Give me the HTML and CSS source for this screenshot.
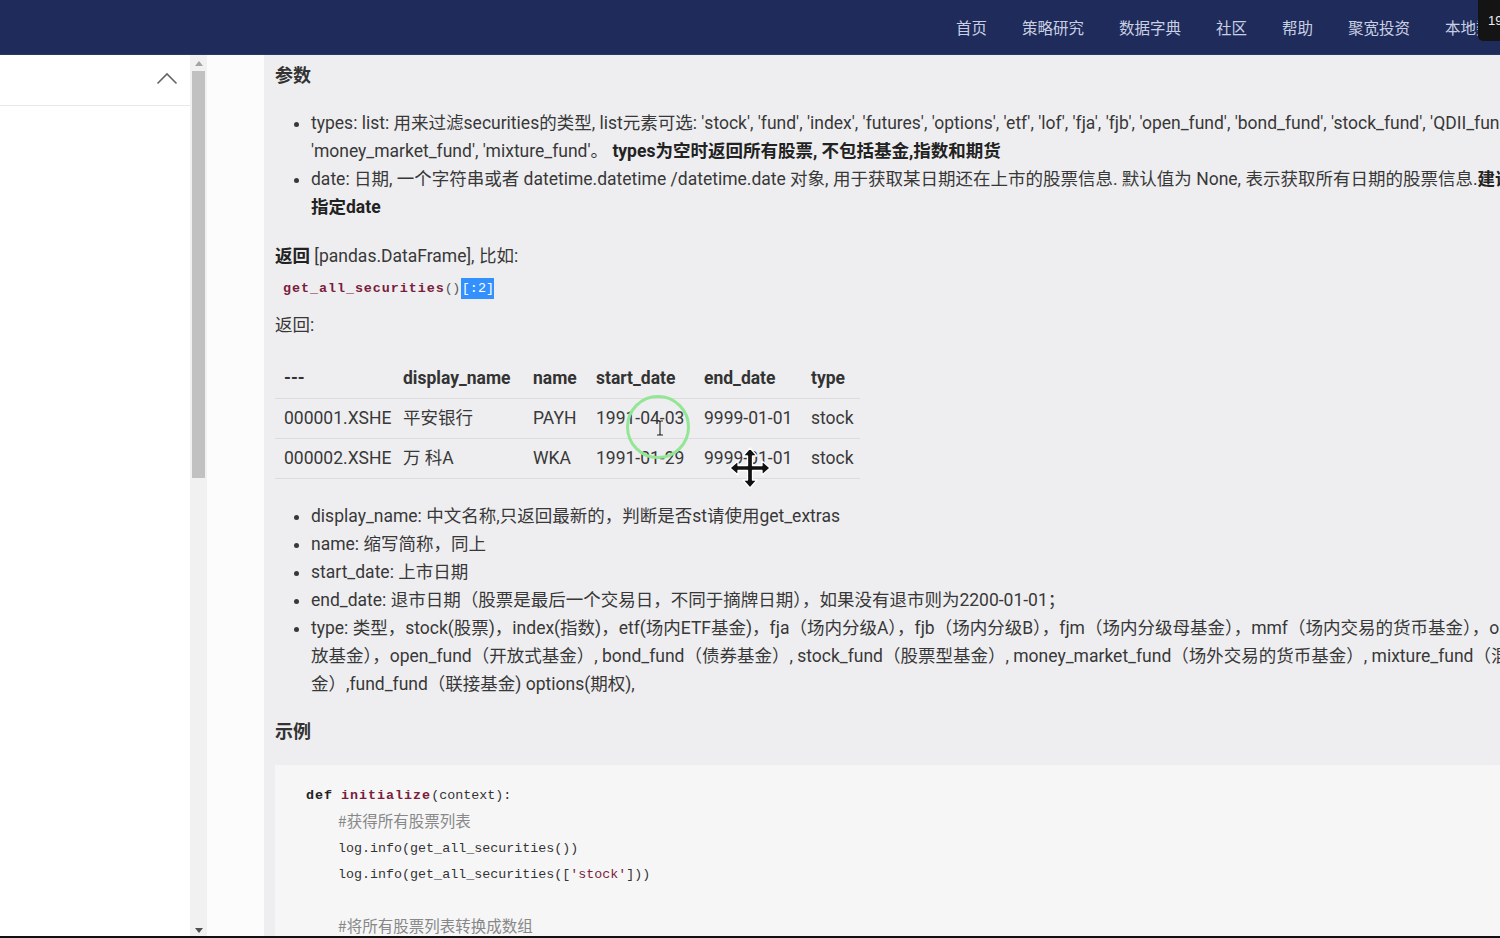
FILE: index.html
```html
<!DOCTYPE html>
<html lang="zh-CN">
<head>
<meta charset="utf-8">
<title>get_all_securities</title>
<link rel="stylesheet" href="styles.css">
</head>
<body>
<header class="topbar">
  <nav class="nav">
    <a>首页</a><a>策略研究</a><a>数据字典</a><a>社区</a><a>帮助</a><a>聚宽投资</a><a>本地数据</a>
  </nav>
  <div class="badge">19</div>
</header>
<div class="main">
  <aside class="sidebar">
    <div class="side-head">
      <svg class="chev" width="22" height="14" viewBox="0 0 22 14"><path d="M1.5 12.5 L11 3 L20.5 12.5" fill="none" stroke="#666" stroke-width="1.6"/></svg>
    </div>
  </aside>
  <div class="scrollbar">
    <div class="sb-btn"><svg width="8" height="5" viewBox="0 0 8 5"><path d="M0 5 L4 0 L8 5 Z" fill="#a3a3a3"/></svg></div>
    <div class="sb-thumb"></div>
    <div class="sb-fill"></div>
    <div class="sb-btn"><svg width="8" height="5" viewBox="0 0 8 5"><path d="M0 0 L4 5 L8 0 Z" fill="#505050"/></svg></div>
  </div>
  <div class="gutter"></div>
  <article class="content">
    <h3 class="h first">参数</h3>
    <ul class="list params">
      <li>types: list: 用来过滤securities的类型, list元素可选: 'stock', 'fund', 'index', 'futures', 'options', 'etf', 'lof', 'fja', 'fjb', 'open_fund', 'bond_fund', 'stock_fund', 'QDII_fund',<br>'money_market_fund', 'mixture_fund'。 <b>types为空时返回所有股票, 不包括基金,指数和期货</b></li>
      <li>date: 日期, 一个字符串或者 datetime.datetime /datetime.date 对象, 用于获取某日期还在上市的股票信息. 默认值为 None, 表示获取所有日期的股票信息.<b>建议</b><br><b>指定date</b></li>
    </ul>
    <p class="ret"><b>返回</b> [pandas.DataFrame], 比如:</p>
    <p class="call"><code class="fn">get_all_securities</code><code class="par">()</code><code class="sel">[:2]</code></p>
    <p class="ret2">返回:</p>
    <table class="tbl">
      <colgroup><col class="c1"><col class="c2"><col class="c3"><col class="c4"><col class="c5"><col class="c6"></colgroup>
      <thead><tr><th>---</th><th>display_name</th><th>name</th><th>start_date</th><th>end_date</th><th>type</th></tr></thead>
      <tbody>
        <tr><td>000001.XSHE</td><td>平安银行</td><td>PAYH</td><td>1991-04-03</td><td>9999-01-01</td><td>stock</td></tr>
        <tr><td>000002.XSHE</td><td>万 科A</td><td>WKA</td><td>1991-01-29</td><td>9999-01-01</td><td>stock</td></tr>
      </tbody>
    </table>
    <ul class="list fields">
      <li>display_name: 中文名称,只返回最新的，判断是否st请使用get_extras</li>
      <li>name: 缩写简称，同上</li>
      <li>start_date: 上市日期</li>
      <li>end_date: 退市日期（股票是最后一个交易日，不同于摘牌日期），如果没有退市则为2200-01-01；</li>
      <li>type: 类型，stock(股票)，index(指数)，etf(场内ETF基金)，fja（场内分级A），fjb（场内分级B），fjm（场内分级母基金），mmf（场内交易的货币基金），open_fund（开<br>放基金），open_fund（开放式基金）, bond_fund（债券基金）, stock_fund（股票型基金）, money_market_fund（场外交易的货币基金）, mixture_fund（混合型基<br>金）,fund_fund（联接基金) options(期权),</li>
    </ul>
    <h3 class="h ex">示例</h3>
    <pre class="codeblock"><span class="kw">def</span> <span class="fnm">initialize</span>(context):
    <span class="cm">#获得所有股票列表</span>
    log.info(get_all_securities())
    log.info(get_all_securities([<span class="st">'stock'</span>]))

    <span class="cm">#将所有股票列表转换成数组</span>
    stocks = list(get_all_securities(['stock']).index)</pre>
  </article>
</div>
<svg class="ov ring" width="70" height="70" viewBox="0 0 70 70"><circle cx="35" cy="35" r="30.5" fill="none" stroke="#93e693" stroke-width="3"/></svg>
<svg class="ov ibeam" width="8" height="16" viewBox="0 0 8 16"><path d="M1 1 H3 Q4 1 4 2.5 V13.5 Q4 15 3 15 H1 M7 1 H5 Q4 1 4 2.5 M4 13.5 Q4 15 5 15 H7" fill="none" stroke="#222" stroke-width="1.1"/></svg>
<svg class="ov move" width="44" height="44" viewBox="0 0 44 44"><path d="M22 2 L29 10 H24.5 V19.5 H34 V15 L42 22 L34 29 V24.5 H24.5 V34 H29 L22 42 L15 34 H19.5 V24.5 H10 V29 L2 22 L10 15 V19.5 H19.5 V10 H15 Z" fill="#111" stroke="#fff" stroke-width="1.3" stroke-linejoin="round"/></svg>
<div class="ov frame-bottom"></div>
</body>
</html>
```
FILE: styles.css
```css
* { box-sizing: border-box; }
html, body { margin: 0; padding: 0; }
body {
  width: 1500px;
  height: 938px;
  overflow: hidden;
  font-family: "Roboto", "Noto Sans CJK SC", sans-serif;
  color: #333;
  background: #fff;
  position: relative;
}
.topbar {
  height: 55px;
  background: #1f2c5b;
  border-bottom: 1px solid #2a3868;
  display: flex;
  align-items: center;
  padding-left: 956px;
  overflow: hidden;
  position: relative;
}
.nav {
  display: flex;
  gap: 35px;
  white-space: nowrap;
  font-family: "Noto Sans CJK SC", sans-serif;
  font-size: 15.5px;
  color: #c9cfe2;
}
.nav a { display: block; line-height: 20px; }
.badge {
  position: absolute;
  right: -6px;
  top: 0;
  width: 28px;
  height: 41px;
  background: #141414;
  border-radius: 0 0 0 5px;
  color: #eee;
  font-family: "Liberation Sans", sans-serif;
  font-size: 13px;
  padding: 13px 0 0 10px;
}
.main {
  display: flex;
  height: 883px;
}
.sidebar {
  width: 190px;
  flex: none;
  background: #fff;
}
.side-head {
  height: 51px;
  border-bottom: 1px solid #e8e8e8;
  display: flex;
  justify-content: flex-end;
  align-items: flex-start;
  padding: 16px 12px 0 0;
}
.scrollbar {
  width: 17px;
  flex: none;
  background: #f1f1f1;
  display: flex;
  flex-direction: column;
  align-items: center;
}
.sb-btn {
  height: 16px;
  width: 17px;
  display: flex;
  align-items: center;
  justify-content: center;
  flex: none;
}
.sb-thumb {
  width: 13px;
  height: 407px;
  background: #c1c1c1;
  flex: none;
}
.sb-fill { flex: 1; }
.gutter {
  width: 57px;
  flex: none;
  background: #fcfcfc;
}
.content {
  flex: 1;
  min-width: 0;
  background: #eeeef0;
  padding: 7px 0 0 11px;
  overflow: hidden;
  font-size: 17.5px;
  line-height: 28px;
  white-space: nowrap;
  color: #383838;
}
.h {
  margin: 0;
  font-size: 18px;
  line-height: 28px;
  font-weight: 700;
  color: #333;
}
.list {
  margin: 0;
  padding-left: 36px;
  list-style: disc;
}
.list b { font-weight: 700; color: #222; }
.params { margin-top: 19px; }
.ret { margin: 21px 0 0; }
.ret b { font-weight: 700; color: #222; }
.call {
  margin: 5px 0 0;
  padding-left: 8px;
  line-height: 28px;
  font-family: "Liberation Mono", "Noto Sans CJK SC", monospace;
  font-size: 13.4px;
}
.call code { font-family: inherit; }
.fn { color: #7b1d3c; font-weight: 700; letter-spacing: 0.95px; }
.par { color: #555; letter-spacing: -0.5px; }
.sel {
  display: inline-block;
  background: #3390ff;
  color: #fff;
  line-height: 21px;
  padding: 0 0 0 1px;
  margin-left: 1px;
}
.ret2 { margin: 8px 0 0; }
.tbl {
  margin-top: 19px;
  border-collapse: collapse;
  table-layout: fixed;
  width: 585px;
}
.c1 { width: 119px; }
.c2 { width: 130px; }
.c3 { width: 63px; }
.c4 { width: 108px; }
.c5 { width: 107px; }
.c6 { width: 58px; }
.tbl th, .tbl td {
  height: 40px;
  padding: 0 0 0 9px;
  text-align: left;
  border-bottom: 1px solid #dcdcde;
  font-size: 17.5px;
  line-height: 28px;
}
.tbl th { font-weight: 700; color: #333; }
.fields { margin-top: 23px; }
.ex { margin-top: 20px; }
.codeblock {
  margin: 19px 0 0;
  background: #f6f6f7;
  padding: 18px 0 0 31px;
  height: 200px;
  font-family: "Liberation Mono", "Noto Sans CJK SC", monospace;
  font-size: 13.35px;
  line-height: 25.4px;
  color: #333;
}
.kw { font-weight: 700; color: #222; letter-spacing: 1px; }
.fnm { font-weight: 700; color: #7b1d3c; letter-spacing: 1px; }
.st { color: #7b1d3c; }
.cm { color: #888; font-family: "Noto Sans CJK SC", sans-serif; font-size: 15.5px; }
.ov { position: absolute; }
.ring { left: 623px; top: 392px; }
.ibeam { left: 656px; top: 420px; }
.move { left: 728px; top: 446px; }
.frame-bottom {
  left: 0;
  bottom: 0;
  width: 1500px;
  height: 2px;
  background: #111;
}
```
